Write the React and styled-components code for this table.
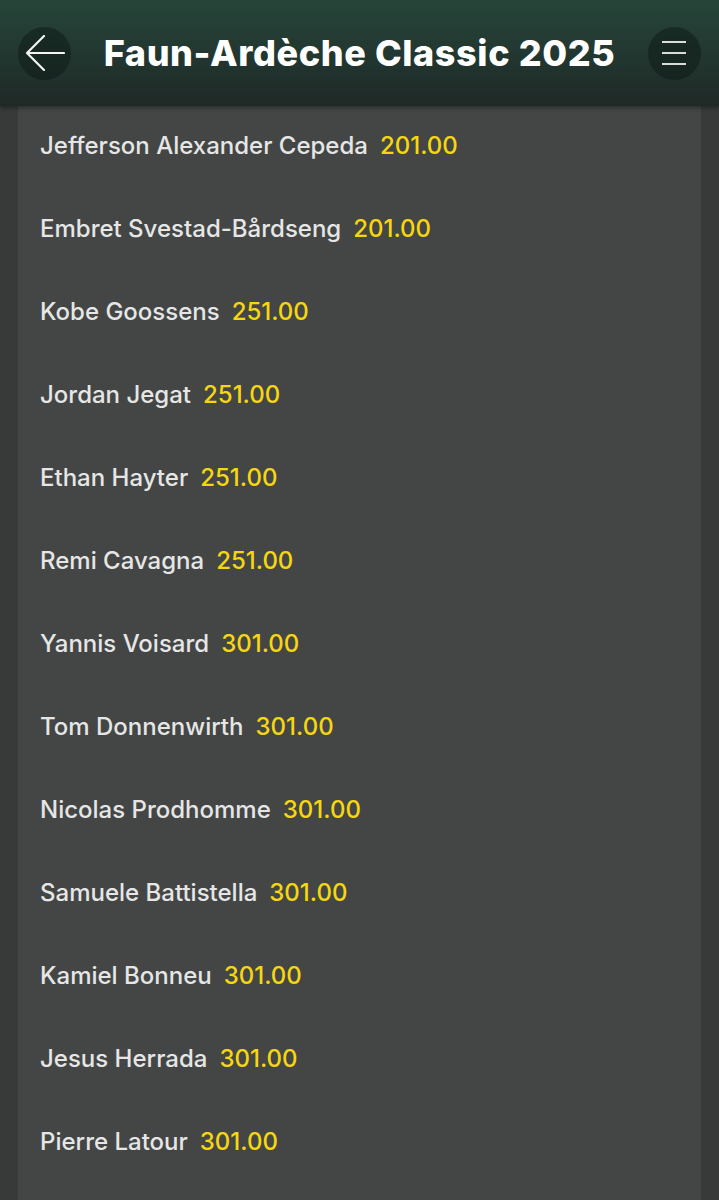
import React from 'react';
import styled, { createGlobalStyle } from 'styled-components';

const GlobalStyle = createGlobalStyle`
  html, body {
    margin: 0;
    padding: 0;
    background: #383939;
  }
  body {
    font-family: Inter, "Noto Sans", sans-serif;
    -webkit-font-smoothing: antialiased;
  }
`;

const Page = styled.div`
  width: 719px;
  height: 1200px;
  overflow: hidden;
  background: #383939;
  display: flex;
  flex-direction: column;
`;

const Header = styled.header`
  height: 106px;
  flex-shrink: 0;
  display: flex;
  align-items: center;
  justify-content: space-between;
  padding: 0 18px;
  box-sizing: border-box;
  background: linear-gradient(180deg, #264539 0%, #223630 55%, #1f2826 100%);
  box-shadow: 0 2px 4px rgba(0, 0, 0, 0.35);
  position: relative;
  z-index: 2;
`;

const RoundButton = styled.button`
  width: 53px;
  height: 53px;
  border-radius: 50%;
  border: none;
  padding: 0;
  background: rgba(15, 28, 24, 0.55);
  display: flex;
  align-items: center;
  justify-content: center;
  flex-shrink: 0;
`;

const Title = styled.h1`
  margin: 0;
  color: #ffffff;
  font-family: Inter, "Noto Sans", sans-serif;
  font-size: 36px;
  font-weight: 800;
  letter-spacing: 0.6px;
  white-space: nowrap;
`;

const Panel = styled.main`
  margin: 0 18px;
  flex: 1;
  background: #434645;
  display: flex;
  flex-direction: column;
`;

const Row = styled.div`
  height: 83px;
  flex-shrink: 0;
  box-sizing: border-box;
  padding: 0 0 4px 22px;
  display: flex;
  align-items: center;
  gap: 12px;
  font-size: 24px;
  font-weight: 500;
`;

const Name = styled.span`
  color: #e6e6e6;
`;

const Price = styled.span`
  color: #f6d70f;
`;

const riders = [
  ['Jefferson Alexander Cepeda', '201.00'],
  ['Embret Svestad-Bårdseng', '201.00'],
  ['Kobe Goossens', '251.00'],
  ['Jordan Jegat', '251.00'],
  ['Ethan Hayter', '251.00'],
  ['Remi Cavagna', '251.00'],
  ['Yannis Voisard', '301.00'],
  ['Tom Donnenwirth', '301.00'],
  ['Nicolas Prodhomme', '301.00'],
  ['Samuele Battistella', '301.00'],
  ['Kamiel Bonneu', '301.00'],
  ['Jesus Herrada', '301.00'],
  ['Pierre Latour', '301.00'],
];

const BackIcon = () => (
  <svg width="40" height="36" viewBox="0 0 40 36" fill="none">
    <path d="M2 18H39M19 1L2 18L19 35" stroke="#f4f4f4" strokeWidth="2.2" strokeLinecap="round" strokeLinejoin="round" />
  </svg>
);

const MenuIcon = () => (
  <svg width="26" height="26" viewBox="0 0 26 26" fill="none">
    <path d="M1 2H25M1 13H25M1 24H25" stroke="#d9dcdb" strokeWidth="2.2" />
  </svg>
);

export default function App() {
  return (
    <>
      <GlobalStyle />
      <Page>
        <Header>
          <RoundButton aria-label="Back">
            <BackIcon />
          </RoundButton>
          <Title>Faun-Ardèche Classic 2025</Title>
          <RoundButton aria-label="Menu">
            <MenuIcon />
          </RoundButton>
        </Header>
        <Panel>
          {riders.map(([name, price]) => (
            <Row key={name}>
              <Name>{name}</Name>
              <Price>{price}</Price>
            </Row>
          ))}
        </Panel>
      </Page>
    </>
  );
}
